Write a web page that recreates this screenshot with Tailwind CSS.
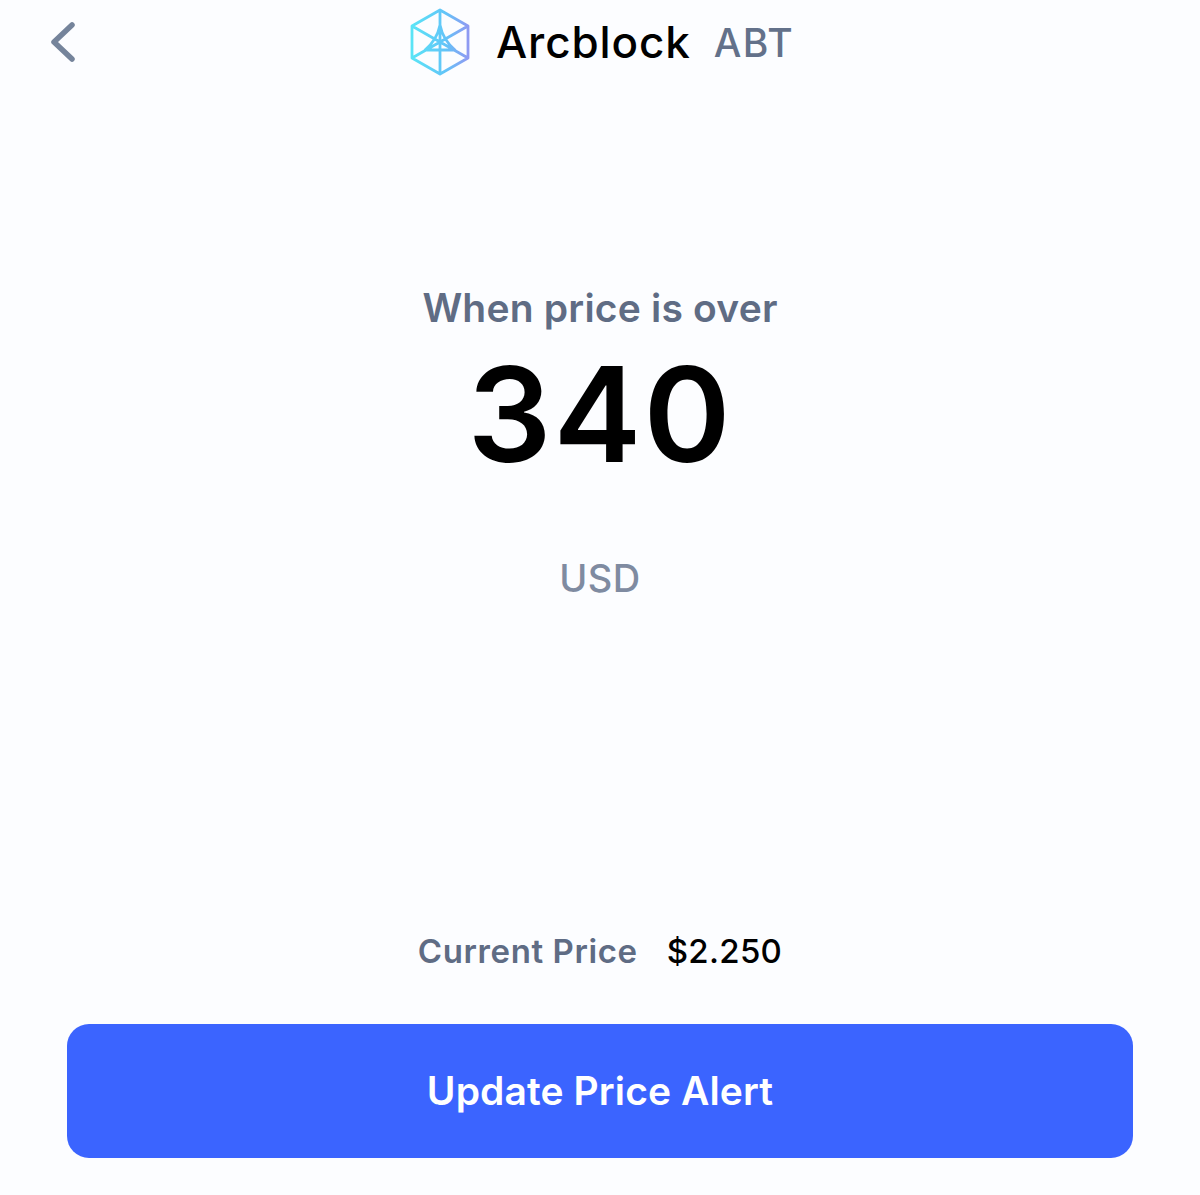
<!DOCTYPE html>
<html lang="en">
<head>
  <meta charset="UTF-8" />
  <title>Price Alert</title>
  <script src="https://cdn.jsdelivr.net/npm/@tailwindcss/browser@4"></script>
</head>
<body class="bg-[#fcfdff] font-['Inter',sans-serif]">
  <div class="h-[1195px] flex flex-col overflow-hidden">

    <!-- Header -->
    <div class="h-[84px] relative flex items-center justify-center pl-[4px]">
      <svg class="absolute left-[46px] top-[20px]" width="32" height="44" viewBox="0 0 32 44" fill="none" stroke="#75849b" stroke-width="5.5" stroke-linecap="round" stroke-linejoin="round"><path d="M26 5 L8 22 L26 39"/></svg>
      <svg class="mr-[26px]" width="60" height="68" viewBox="0 0 60 68" fill="none" stroke-width="2.8" stroke-linejoin="round">
        <defs><linearGradient id="hex" gradientUnits="userSpaceOnUse" x1="2" y1="0" x2="58" y2="0"><stop offset="0" stop-color="#5ae4f6"/><stop offset="0.6" stop-color="#62c4f8"/><stop offset="1" stop-color="#8f9af2"/></linearGradient></defs>
        <path stroke="url(#hex)" d="M30 2 L58 18 V50 L30 66 L2 50 V18 Z M2 18 L30 34 L58 18 M30 34 V66 M30 2 V34 M2 50 L30 34 L58 50 M30 17 Q27 32 15 42 H45 Q33 32 30 17 Z"/>
      </svg>
      <span class="text-[44px] leading-none font-medium text-black tracking-[0.9px]">Arcblock</span>
      <span class="ml-[23px] text-[39px] leading-none font-medium text-[#63718a] tracking-[1.2px]">ABT</span>
    </div>

    <!-- Price -->
    <div class="flex flex-col items-center">
      <div class="mt-[198px] text-[39px] leading-[52px] font-semibold text-[#5f6c84] tracking-[0.2px]">When price is over</div>
      <div class="mt-[6px] h-[130px] text-[132px] leading-[148px] font-semibold text-black tracking-[2px]">340</div>
      <div class="mt-[84px] text-[38px] leading-[48px] font-medium text-[#7f8ba1] tracking-[0.4px]">USD</div>
    </div>

    <!-- Current price -->
    <div class="mt-[327px] flex justify-center items-center gap-[29px] text-[33px] leading-[44px] font-semibold">
      <span class="text-[#5f6c84] tracking-[0.6px]">Current Price</span>
      <span class="text-black tracking-[0.3px] font-medium">$2.250</span>
    </div>

    <!-- Button -->
    <div class="mt-[51px] px-[67px]">
      <button class="w-full h-[134px] rounded-[22px] bg-[#3b64ff] text-white text-[39px] font-semibold tracking-[0.1px]">Update Price Alert</button>
    </div>
  </div>
</body>
</html>
